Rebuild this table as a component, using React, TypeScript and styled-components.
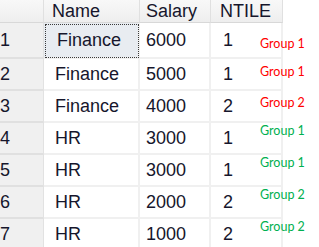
import React from "react";
import styled, { createGlobalStyle } from "styled-components";

type Row = { id: number; name: string; salary: number; ntile: number; group: string; tone: "red" | "green" };

const rows: Row[] = [
  { id: 1, name: "Finance", salary: 6000, ntile: 1, group: "Group 1", tone: "red" },
  { id: 2, name: "Finance", salary: 5000, ntile: 1, group: "Group 1", tone: "red" },
  { id: 3, name: "Finance", salary: 4000, ntile: 2, group: "Group 2", tone: "red" },
  { id: 4, name: "HR", salary: 3000, ntile: 1, group: "Group 1", tone: "green" },
  { id: 5, name: "HR", salary: 3000, ntile: 1, group: "Group 1", tone: "green" },
  { id: 6, name: "HR", salary: 2000, ntile: 2, group: "Group 2", tone: "green" },
  { id: 7, name: "HR", salary: 1000, ntile: 2, group: "Group 2", tone: "green" },
];

// annotation tops, hand-placed beside each row
const labelTops = [36, 64, 95, 123, 155, 187, 219];

const GlobalStyle = createGlobalStyle`
  html, body { margin: 0; padding: 0; background: #fff; overflow: hidden; }
`;

const Page = styled.div`
  position: relative;
  width: 319px;
  height: 247px;
  overflow: hidden;
  background: #fff;
`;

const Grid = styled.div`
  display: grid;
  grid-template-columns: 44px 96px 71px 72px;
  grid-template-rows: 23px 36px repeat(6, 32px);
  width: 283px;
  font-family: "Liberation Sans", Arial, sans-serif;
  font-size: 18px;
  color: #16162c;
`;

const HeadCell = styled.div<{ $pad: number }>`
  display: flex;
  align-items: center;
  padding-left: ${({ $pad }) => $pad}px;
  padding-bottom: 1px;
  background: linear-gradient(#f8f8f8, #eeeeee);
  border-right: 1px solid #e0e0e0;
  border-bottom: 1px solid #d8d8d8;
  box-sizing: border-box;
  line-height: 1;
`;

const RowHead = styled.div`
  display: flex;
  align-items: center;
  padding-left: 0;
  background: #f0f0f0;
  border-right: 1px solid #e2e2e2;
  border-bottom: 2px solid #e0e0e0;
  box-sizing: border-box;
`;

const Cell = styled.div<{ $pad: number; $selected?: boolean }>`
  display: flex;
  align-items: center;
  padding-left: ${({ $pad }) => $pad}px;
  box-sizing: border-box;
  border-right: 2px solid #f0f0f0;
  border-bottom: 2px solid #f0f0f0;
  background: ${({ $selected }) => ($selected ? "#e8ecf1" : "#fff")};
  outline: ${({ $selected }) => ($selected ? "1px dotted #3a3a3a" : "none")};
  outline-offset: -2px;
`;

const GroupLabel = styled.span<{ $tone: "red" | "green" }>`
  position: absolute;
  left: 260px;
  font-family: Lato, "Open Sans", sans-serif;
  font-size: 12.5px;
  color: ${({ $tone }) => ($tone === "red" ? "#ff0000" : "#00b050")};
  white-space: nowrap;
`;

export default function App() {
  return (
    <Page>
      <GlobalStyle />
      <Grid>
        <HeadCell $pad={0} />
        <HeadCell $pad={8}>Name</HeadCell>
        <HeadCell $pad={6}>Salary</HeadCell>
        <HeadCell $pad={9}>NTILE</HeadCell>
        {rows.map((r) => (
          <React.Fragment key={r.id}>
            <RowHead>{r.id}</RowHead>
            <Cell $pad={r.id === 1 ? 13 : 11} $selected={r.id === 1}>
              {r.name}
            </Cell>
            <Cell $pad={6}>{r.salary}</Cell>
            <Cell $pad={12}>{r.ntile}</Cell>
          </React.Fragment>
        ))}
      </Grid>
      {rows.map((r, i) => (
        <GroupLabel key={r.id} $tone={r.tone} style={{ top: labelTops[i] }}>
          {r.group}
        </GroupLabel>
      ))}
    </Page>
  );
}
